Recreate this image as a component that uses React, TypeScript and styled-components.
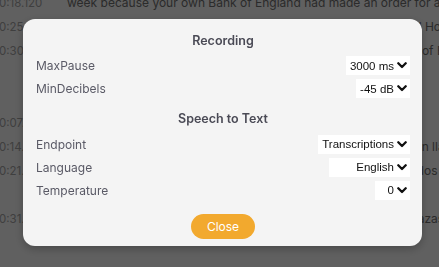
import React from 'react'
import styled, { createGlobalStyle } from 'styled-components'

const GlobalStyle = createGlobalStyle`
  html, body {
    margin: 0;
    padding: 0;
    background: #fff;
    overflow: hidden;
  }
  body {
    font-family: Inter, "Noto Sans", sans-serif;
  }
`

const Transcript = styled.div`
  margin: -9px 0 0 -1px;
  width: 1200px;
`

const Entry = styled.div`
  display: flex;
  align-items: flex-start;
`

const Stamp = styled.div`
  width: 68px;
  flex: none;
  font-size: 11.5px;
  line-height: 24px;
  color: #a8a8a8;
`

const Lines = styled.div`
  display: flex;
  flex-direction: column;
`

const Line = styled.div`
  white-space: nowrap;
  font-size: 12px;
  line-height: 24px;
  color: #727272;
`

const Backdrop = styled.div`
  position: fixed;
  inset: 0;
  background: rgba(0, 0, 0, 0.625);
  display: flex;
  align-items: center;
  justify-content: center;
`

const Modal = styled.div`
  width: 399px;
  box-sizing: border-box;
  margin: -2px 0 0 6px;
  padding: 12px 12px 7px 13px;
  background: #f4f4f4;
  border-radius: 12px;
  box-shadow: 0 3px 10px rgba(0, 0, 0, 0.25);
  display: flex;
  flex-direction: column;
  gap: 11px;
`

const Section = styled.section`
  display: flex;
  flex-direction: column;
  gap: 4px;
`

const Title = styled.h3`
  margin: 0 0 1.5px;
  font-size: 12.5px;
  line-height: 20px;
  font-weight: 600;
  color: #4a4a55;
  text-align: center;
`

const Row = styled.div`
  display: flex;
  align-items: center;
  justify-content: space-between;
  height: 19px;
`

const Label = styled.span`
  font-size: 12px;
  color: #5a5a66;
`

const SelectButton = styled.button<{ $width: number }>`
  min-width: ${({ $width }) => $width}px;
  height: 19px;
  box-sizing: border-box;
  padding: 0 3px 0 4px;
  border: none;
  background: #fff;
  display: inline-flex;
  align-items: center;
  justify-content: flex-end;
  gap: 3px;
  white-space: nowrap;
  font-family: "Liberation Sans", Arial, sans-serif;
  font-size: 11.5px;
  color: #111;
`

const Footer = styled.div`
  display: flex;
  justify-content: center;
  margin-top: 3.5px;
`

const CloseButton = styled.button`
  width: 64px;
  height: 25px;
  border: none;
  border-radius: 13px;
  background: #f2a92e;
  color: #fff;
  font-family: Inter, sans-serif;
  font-size: 12px;
`

const Chevron = () => (
  <svg width="10" height="7" viewBox="0 0 10 7">
    <path d="M1.3 1.3 L5 5 L8.7 1.3" fill="none" stroke="#111" strokeWidth="2.3" strokeLinecap="round" strokeLinejoin="round" />
  </svg>
)

const entries = [
  { t: '0:18.120', lines: ['week because your own Bank of England had made an order for a substantial sum of money'] },
  { t: '0:25.480', lines: ['that it was to be paid out of the funds for the old Bristol School House'] },
  { t: '0:30.960', lines: ['and so the honourable governor and the company of the Bank of England', 'had no', 'choice'] },
  { t: '0:07.240', lines: ['Hola a todos'] },
  { t: '0:14.800', lines: ['Esta semana hemos recibido en nuestro programa de radio cien llamadas'] },
  { t: '0:21.360', lines: ['que nos ha sorprendido mucho y que queremos contaros a todos', 'y'] },
  { t: '0:31.120', lines: ['Y por supuesto, no hemos respondido a ninguna de sus amenazas'] },
]

const settings = [
  {
    title: 'Recording',
    rows: [
      { label: 'MaxPause', value: '3000 ms', width: 63 },
      { label: 'MinDecibels', value: '-45 dB', width: 52 },
    ],
  },
  {
    title: 'Speech to Text',
    rows: [
      { label: 'Endpoint', value: 'Transcriptions', width: 90 },
      { label: 'Language', value: 'English', width: 81 },
      { label: 'Temperature', value: '0', width: 35 },
    ],
  },
]

const App = () => {
  return (
    <>
      <GlobalStyle />
      <Transcript>
        {entries.map((e) => (
          <Entry key={e.t}>
            <Stamp>{e.t}</Stamp>
            <Lines>
              {e.lines.map((l, i) => (
                <Line key={i}>{l}</Line>
              ))}
            </Lines>
          </Entry>
        ))}
      </Transcript>
      <Backdrop>
        <Modal>
          {settings.map((s) => (
            <Section key={s.title}>
              <Title>{s.title}</Title>
              {s.rows.map((r) => (
                <Row key={r.label}>
                  <Label>{r.label}</Label>
                  <SelectButton $width={r.width}>
                    <span>{r.value}</span>
                    <Chevron />
                  </SelectButton>
                </Row>
              ))}
            </Section>
          ))}
          <Footer>
            <CloseButton>Close</CloseButton>
          </Footer>
        </Modal>
      </Backdrop>
    </>
  )
}

export default App
